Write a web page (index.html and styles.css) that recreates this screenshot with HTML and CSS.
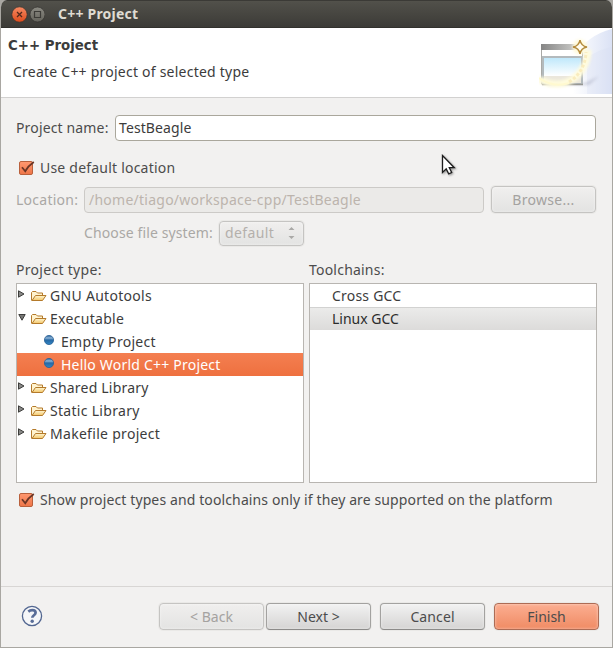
FILE: index.html
```html
<!DOCTYPE html>
<html lang="en">
<head>
<meta charset="utf-8">
<title>C++ Project</title>
<link rel="stylesheet" href="styles.css">
</head>
<body>
<svg class="defs" width="0" height="0" aria-hidden="true">
  <defs>
    <linearGradient id="gold" x1="0" y1="0" x2="0" y2="1"><stop offset="0" stop-color="#fff6d2"/><stop offset="1" stop-color="#f3c668"/></linearGradient>
    <linearGradient id="blue" x1="0" y1="0" x2="0" y2="1"><stop offset="0" stop-color="#1c5a94"/><stop offset=".28" stop-color="#8fb5d8"/><stop offset=".5" stop-color="#2768a4"/><stop offset="1" stop-color="#3187c6"/></linearGradient>
    <linearGradient id="orange" x1="0" y1="0" x2="0" y2="1"><stop offset="0" stop-color="#ff9870"/><stop offset="1" stop-color="#ee7548"/></linearGradient>
    <symbol id="folder" viewBox="0 0 16 13">
      <path d="M.5 11.5V3.5L1.5 2.5h3.5L6.5 4h5v2.5" fill="#fff3cf" stroke="#b47a2b"/>
      <path d="M1 11.5 4.5 6.5H15l-3.5 5z" fill="url(#gold)" stroke="#b47a2b"/>
    </symbol>
    <symbol id="closed" viewBox="0 0 7 8"><path d="M.5.8 6 4 .5 7.2z" fill="#8a8a88" stroke="#3d3d3b"/></symbol>
    <symbol id="opened" viewBox="0 0 8 7"><path d="M.8.5h6.4L4 6.2z" fill="#777775" stroke="#3d3d3b"/></symbol>
    <symbol id="dot" viewBox="0 0 10 10"><circle cx="5" cy="5" r="4.6" fill="url(#blue)" stroke="#2a6195" stroke-width=".8"/></symbol>
    <symbol id="check" viewBox="0 0 18 16">
      <rect x="1.5" y="1.5" width="13" height="13" rx="1.5" fill="url(#orange)" stroke="#b9603c"/>
      <path d="M4 7.2 7.2 11.2Q10 6 15.8 2" fill="none" stroke="#6b3626" stroke-width="1.8"/>
    </symbol>
  </defs>
</svg>
<div class="window">
  <header class="titlebar">
    <svg class="winbtn" width="34" height="18" viewBox="0 0 34 18">
      <defs><linearGradient id="cl" x1="0" y1="0" x2="0" y2="1"><stop offset="0" stop-color="#f68a63"/><stop offset="1" stop-color="#de4b1c"/></linearGradient>
      <linearGradient id="mx" x1="0" y1="0" x2="0" y2="1"><stop offset="0" stop-color="#8b8a82"/><stop offset="1" stop-color="#64635c"/></linearGradient></defs>
      <circle cx="8.5" cy="9.5" r="7.7" fill="url(#cl)" stroke="#33322e" stroke-width=".7"/>
      <path d="m6 7 5 5m0-5-5 5" stroke="#53291c" stroke-width="1.3"/>
      <circle cx="26.5" cy="9.5" r="7.5" fill="url(#mx)" stroke="#33322e" stroke-width=".7"/>
      <path d="M23.5 6.5h6v6h-6z" fill="none" stroke="#3c3b37" stroke-width="1.2"/>
    </svg>
    <span class="t-title">C++ Project</span>
  </header>
  <section class="banner">
    <div class="banner-text">
      <h1>C++ Project</h1>
      <p>Create C++ project of selected type</p>
    </div>
    <svg class="wizard" width="73" height="66" viewBox="0 0 73 66">
      <defs>
        <linearGradient id="bg" x1="0" y1="0" x2="1" y2="0"><stop offset="0" stop-color="#fff"/><stop offset="1" stop-color="#dbe2f5"/></linearGradient>
        <linearGradient id="pane" x1="0" y1="0" x2="0" y2="1"><stop offset="0" stop-color="#c0e8fb"/><stop offset="1" stop-color="#fff"/></linearGradient>
        <linearGradient id="bar" x1="0" y1="0" x2="1" y2="0"><stop offset="0" stop-color="#858585"/><stop offset="1" stop-color="#d8d8d5"/></linearGradient>
        <filter id="soft" x="-30%" y="-30%" width="160%" height="160%" color-interpolation-filters="sRGB"><feGaussianBlur stdDeviation="1.6"/></filter>
      </defs>
      <path d="M34 66V30Q48 7 73 1v65z" fill="url(#bg)"/>
      <path d="M48 66V30Q58 22 73 19v47z" fill="#d6def3" opacity=".3"/>
      <path d="M10 55h36l14-7-10 9H8z" fill="#777b98" opacity=".3" filter="url(#soft)"/>
      <path d="M2.5 17h41v39h-41z" fill="#fff" stroke="#a9a9a6"/>
      <path d="M2 16h42v6H2z" fill="url(#bar)"/>
      <path d="M4 29h39v27H4z" fill="#ebe7dc" stroke="#b3babd" stroke-width="2"/>
      <path d="M5 30h37v18H5z" fill="url(#pane)"/>
      <path d="M3 56.5h41" stroke="#979793" stroke-width="1.5"/>
      <path d="M0 51Q20 62 37 49 49 37 49 22" fill="none" stroke="#fffbdc" stroke-width="7" filter="url(#soft)"/>
      <circle cx="41" cy="19" r="7.5" fill="#fffadb" filter="url(#soft)"/>
      <path d="M0 50Q14 60 30 55" fill="none" stroke="#fff9cf" stroke-width="2"/>
      <path d="M30 54Q46 44 47 24" fill="none" stroke="#f7e9b8" stroke-width="3" stroke-dasharray="3 2" opacity=".8"/>
      <path d="M41 12Q42 18 48 19 42 20 41 26 40 20 34 19 40 18 41 12z" fill="#fffdf0" stroke="#b48b3c" stroke-width="1.5"/>
    </svg>
  </section>
  <main class="content">
    <div class="row name-row"><label class="t-name">Project name:</label><div class="field name-field"><span class="t-test">TestBeagle</span></div></div>
    <div class="row check-row"><svg class="box" width="18" height="16"><use href="#check"/></svg><span class="t-use">Use default location</span></div>
    <div class="row loc-row disabled"><label class="t-loc">Location:</label><div class="field loc-field"><span class="t-path">/home/tiago/workspace-cpp/TestBeagle</span></div><div class="button browse"><span class="t-browse">Browse...</span></div></div>
    <div class="row fs-row disabled"><label class="t-fs">Choose file system:</label><div class="button select"><span class="t-def">default</span><svg width="7" height="14" viewBox="0 0 7 14"><path d="m.5 4 3-3 3 3zM.5 10l3 3 3-3z" fill="#aaa9a7"/></svg></div></div>
    <div class="lists">
      <div class="column">
        <div class="caption t-ptype">Project type:</div>
        <div class="list">
          <div class="item"><svg class="closed"><use href="#closed"/></svg><svg class="folder"><use href="#folder"/></svg><span class="t-gnu">GNU Autotools</span></div>
          <div class="item"><svg class="opened"><use href="#opened"/></svg><svg class="folder"><use href="#folder"/></svg><span class="t-exe">Executable</span></div>
          <div class="item child"><svg class="dot"><use href="#dot"/></svg><span class="t-empty">Empty Project</span></div>
          <div class="item child selected"><svg class="dot"><use href="#dot"/></svg><span class="t-hello">Hello World C++ Project</span></div>
          <div class="item"><svg class="closed"><use href="#closed"/></svg><svg class="folder"><use href="#folder"/></svg><span class="t-shared">Shared Library</span></div>
          <div class="item"><svg class="closed"><use href="#closed"/></svg><svg class="folder"><use href="#folder"/></svg><span class="t-static">Static Library</span></div>
          <div class="item"><svg class="closed"><use href="#closed"/></svg><svg class="folder"><use href="#folder"/></svg><span class="t-make">Makefile project</span></div>
        </div>
      </div>
      <div class="column">
        <div class="caption t-tool">Toolchains:</div>
        <div class="list chains">
          <div class="item"><span class="t-cross">Cross GCC</span></div>
          <div class="item current"><span class="t-linux">Linux GCC</span></div>
        </div>
      </div>
    </div>
    <div class="row show-row"><svg class="box" width="18" height="16"><use href="#check"/></svg><span class="t-show">Show project types and toolchains only if they are supported on the platform</span></div>
  </main>
  <footer class="footer">
    <svg class="help" width="22" height="22" viewBox="0 0 22 22"><circle cx="11" cy="11" r="9.6" fill="#f5f6f8" stroke="#526690" stroke-width="1.3"/><path d="M7.3 6.6Q9 5.2 11.2 5.2c2.2 0 3.4 1 3.4 2.6 0 2.4-3.3 2.6-3.3 5" fill="none" stroke="#596d98" stroke-width="2.7"/><circle cx="11.2" cy="16.3" r="1.7" fill="#596d98"/></svg>
    <div class="button disabled"><span class="t-back">&lt; Back</span></div>
    <div class="button next"><span class="t-next">Next &gt;</span></div>
    <div class="button cancel"><span class="t-cancel">Cancel</span></div>
    <div class="button finish"><span class="t-finish">Finish</span></div>
  </footer>
  <svg class="pointer" width="16" height="22" viewBox="0 0 16 22"><path d="M1.5 1.5v17l3.7-3.6 2.5 5 3-1.4-2.4-4.8h5z" fill="#fff" stroke="#1c1c1c" stroke-width="1.3"/></svg>
</div>
</body>
</html>
```
FILE: styles.css
```css
* { box-sizing: border-box; }
body { margin: 0; background: #a9a7a2; font: 14px/20px "Noto Sans", "Open Sans", sans-serif; color: #4c4c4c; }
.defs { position: absolute; }
svg { display: block; flex: none; }
span, label { white-space: nowrap; }
.window { position: relative; width: 613px; height: 648px; display: flex; flex-direction: column; background: #f2f1f0; border: 1px solid #a9a7a2; border-top: 0; border-radius: 7px 7px 0 0; overflow: hidden; }
.titlebar { height: 28px; margin: 0 -1px; padding-left: 11px; display: flex; align-items: center; background: linear-gradient(#53524b 0, #504f49 2px, #3c3b37); border-top: 1px solid #3b3a36; border-bottom: 1px solid #32312d; color: #dfdbd2; font-weight: 700; }
.winbtn { margin-right: 13px; }
.banner { height: 70px; display: flex; justify-content: space-between; background: #fff; border-bottom: 1px solid #d2d1d0; color: #3c3c3c; }
.banner-text { padding: 8px 0 0 7px; }
h1 { margin: 0; font: 700 13.33px/20px "DejaVu Sans", sans-serif; white-space: nowrap; }
p { margin: 6px 0 0 5px; white-space: nowrap; letter-spacing: .23px; }
.content { height: 489px; padding: 17px 15px 0; border-bottom: 1px solid #d8d6d4; }
.row { display: flex; align-items: center; }
.field { height: 26px; display: flex; align-items: center; padding-left: 4px; background: #fff; border: 1px solid #aaa79c; border-radius: 4px; color: #3c3c3c; }
.name-row { height: 26px; }
.t-name { width: 99px; }
.name-field { width: 481px; padding-left: 3px; }
.check-row { height: 20px; margin-top: 17px; padding-left: 2px; }
.box { margin-right: 4px; }
.disabled { color: #aaa8a5; }
.loc-row { height: 27px; margin-top: 8px; }
.t-loc { width: 68px; }
.loc-field { width: 400px; margin-right: 7px; background: #ebeae8; border-color: #cccac7; color: #bcb4ad; }
.button { height: 27px; width: 105px; display: flex; align-items: center; justify-content: center; border: 1px solid #a3a2a0; border-bottom-color: #8c8b89; border-radius: 4px; background: linear-gradient(#f2f2f2, #d5d4d3); box-shadow: inset 0 0 3px #fff8, 0 0 0 1px #eae9e7; }
.disabled.button, .disabled .button { border-color: #c5c4c2; background: linear-gradient(#f0efee, #e3e3e2); color: #a4a2a0; }
.fs-row { height: 26px; margin-top: 7px; padding-left: 68px; }
.t-fs { width: 135px; }
.disabled .select { width: 85px; height: 25px; padding: 0 8px 0 5px; justify-content: space-between; color: #b4b0ac; }
.lists { display: flex; gap: 5px; margin-top: 14px; }
.column { width: 288px; }
.caption { height: 23px; line-height: 20px; white-space: nowrap; }
.list { height: 200px; background: #fff; border: 1px solid #b8b5b1; color: #3c3c3c; }
.item { height: 23px; display: flex; align-items: center; }
.item .closed { width: 7px; height: 8px; margin: -3px 7px 0 1px; }
.item .opened { width: 8px; height: 7px; margin: -3px 6px 0 1px; }
.folder { width: 16px; height: 13px; margin: 0 3px 0 -1px; }
.child { padding-left: 27px; }
.dot { width: 10px; height: 10px; margin: -3px 7px 0 0; }
.selected { background: linear-gradient(#f47f51, #ee703f); color: #fff; }
.chains .item { padding-left: 22px; }
.chains .current { background: linear-gradient(#ebebea, #dcdbda); border-top: 1px solid #d2d2d1; color: #2c2c2c; }
.show-row { height: 20px; margin-top: 7px; padding-left: 2px; }
.footer { display: flex; padding: 16px 0 0 20px; }
.help { margin: 2px 116px 0 0; }
.next { margin-left: 2px; }
.cancel { margin-left: 9px; }
.finish { margin-left: 9px; background: linear-gradient(#fbae91, #f08b64); border-color: #ad6c55; }
.pointer { position: absolute; left: 440px; top: 154px; filter: drop-shadow(1px 1px 1px #0006); }

/* tracking */
.t-show { letter-spacing: .118px; }
.t-test, .t-cancel { letter-spacing: .1px; }
.t-fs { letter-spacing: .12px; }
.t-name { letter-spacing: .15px; }
.t-title, .t-use, .t-hello, .t-shared, .t-tool, .t-cross { letter-spacing: .21px; }
.t-path, .t-loc { letter-spacing: .25px; }
.t-browse, .t-ptype, .t-gnu, .t-exe, .t-empty, .t-static, .t-make { letter-spacing: .3px; }
.t-def { letter-spacing: .4px; }
```
